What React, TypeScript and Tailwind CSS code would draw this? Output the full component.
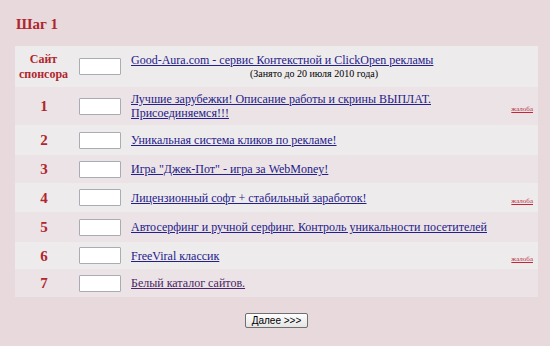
import React from "react";

type Row = { n: string; text: React.ReactNode; h: string; bg: string; complaint?: boolean; visited?: boolean };

const light = "bg-[#eeebec]";
const pink = "bg-[#ebe3e5]";

const rows: Row[] = [
  { n: "1", text: <>Лучшие зарубежки! Описание работы и скрины ВЫПЛАТ.<br />Присоединяемся!!!</>, h: "h-[38px]", bg: pink, complaint: true },
  { n: "2", text: "Уникальная система кликов по рекламе!", h: "h-[30px]", bg: light },
  { n: "3", text: "Игра \"Джек-Пот\" - игра за WebMoney!", h: "h-[28px]", bg: pink },
  { n: "4", text: "Лицензионный софт + стабильный заработок!", h: "h-[29px]", bg: light, complaint: true },
  { n: "5", text: "Автосерфинг и ручной серфинг. Контроль уникальности посетителей", h: "h-[30px]", bg: pink },
  { n: "6", text: "FreeViral классик", h: "h-[27px]", bg: light, complaint: true },
  { n: "7", text: "Белый каталог сайтов.", h: "h-[28px]", bg: pink, visited: true },
];

function Box() {
  return <div className="w-[42px] h-[17px] bg-white border border-[#a9adb3] rounded-[1px] ml-[7px]" />;
}

export default function App() {
  return (
    <div className="w-[550px] h-[346px] bg-[#e7d9dc] overflow-hidden" style={{ fontFamily: '"Liberation Serif", "Times New Roman", serif' }}>
      <div className="pt-[15px] pl-[16px] text-[15px] font-bold text-[#b0262c] leading-[18px]">Шаг 1</div>
      <div className="mt-[13px] ml-[15px] w-[523px] flex flex-col">
        <div className={`grid grid-cols-[57px_59px_1fr_41px] items-center h-[41px] ${light}`}>
          <div className="text-center text-[12px] font-bold text-[#b0262c] leading-[15px]">Сайт<br />спонсора</div>
          <div><Box /></div>
          <div className="w-full text-center">
            <div className="text-left text-[12px] leading-[14px] text-[#24208a] underline">Good-Aura.com - сервис Контекстной и ClickOpen рекламы</div>
            <div className="text-[10px] leading-[13px] text-black">(Занято до 20 июля 2010 года)</div>
          </div>
          <div />
        </div>
        {rows.map((r) => (
          <div key={r.n} className={`grid grid-cols-[57px_59px_1fr_41px] items-center ${r.h} ${r.bg}`}>
            <div className="text-center text-[15px] font-bold text-[#b0262c] leading-[16px] pl-[1px]">{r.n}</div>
            <div><Box /></div>
            <div className={`text-[12px] leading-[14px] underline ${r.visited ? "text-[#4a2465]" : "text-[#24208a]"}`}>{r.text}</div>
            <div className="text-right pr-[5px]">
              {r.complaint && <span className="text-[7px] leading-[8px] text-[#c0283a] underline">жалоба</span>}
            </div>
          </div>
        ))}
      </div>
      <div className="flex justify-center mt-[16px] pl-[3px]">
        <button className="h-[15px] px-[6px] text-[10px] leading-[13px] text-black bg-gradient-to-b from-white to-[#e4e4e4] border border-[#6f6f6f] rounded-[2px]" style={{ fontFamily: '"Liberation Sans", Arial, sans-serif' }}>
          Далее &gt;&gt;&gt;
        </button>
      </div>
    </div>
  );
}
